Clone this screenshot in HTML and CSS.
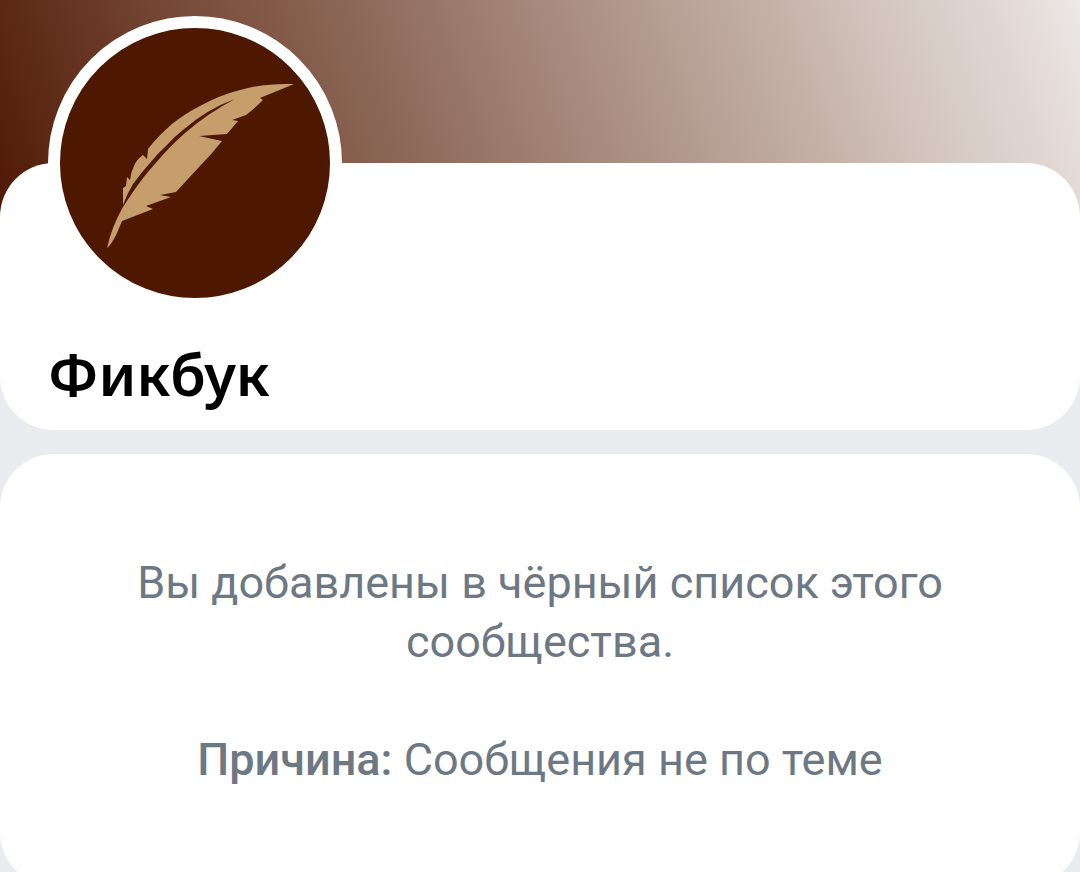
FILE: index.html
```html
<!DOCTYPE html>
<html lang="ru">
<head>
<meta charset="utf-8">
<meta name="viewport" content="width=device-width, initial-scale=1">
<title>Фикбук</title>
<link rel="stylesheet" href="styles.css">
</head>
<body>
<main class="community">
  <header class="cover">
    <section class="card profile">
      <svg class="avatar" viewBox="60 28 270 270" role="img" aria-label="Перо">
        <path class="feather" d="M294 84Q264 83 240 90Q220 95 200 106Q186 113 172 124Q158 136 148 149L147 159L143 155Q136 160 134 166Q131 172 130 180L127 177L126 186L123 188L123 205Q127 194 133 184Q141 173 150 163Q158 153 167 145Q175 136 183 130Q207 109 235 99Q208 113 185 133Q169 147 154 165Q141 179 123 207Q112 226 107 248Q112 244 117 233L122 221L153 209L146 206L171 197L160 195L176 192Q188 179 199 167Q212 154 222 141L199 136L227 134L238 121L232 120L246 115Q254 109 263 100L260 98Z"/>
      </svg>
      <h1 class="name">Фикбук</h1>
    </section>
  </header>
  <section class="card notice">
    <p class="message">Вы добавлены в чёрный список этого сообщества.</p>
    <p class="message"><strong class="label">Причина:</strong> Сообщения не по теме</p>
  </section>
</main>
</body>
</html>
```
FILE: styles.css
```css
body {
  margin: 0;
  height: 100vh;
  overflow: hidden;
  background: #ebecf0;
  font-family: Roboto, "Noto Sans", sans-serif;
}

.community {
  display: flex;
  flex-direction: column;
  gap: 24px;
}

.cover {
  padding-top: 163px;
  background: linear-gradient(70deg, #4e1804 0%, #5c2813 7%, #7a4e3d 24%, #8b6555 36%, #a6897c 53%, #c6b3aa 74%, #d4c7c0 83%, #e2d8d4 93%, #ece9e7 100%) top / 100% 230px no-repeat;
}

.card {
  border-radius: 54px;
  background: #fff;
}

.profile {
  display: flex;
  flex-direction: column;
  align-items: flex-start;
  padding: 0 48px 20px;
}

.avatar {
  width: 270px;
  height: 270px;
  margin-top: -147px;
  border: 12px solid #fff;
  border-radius: 50%;
  background: #4e1700;
}

.feather {
  fill: #c69e6b;
}

.name {
  margin: 28px 0 0;
  font: 600 58px/72px "Noto Sans", sans-serif;
  color: #000;
}

.notice {
  display: flex;
  flex-direction: column;
  gap: 59px;
  padding: 99px 96px 97px;
}

.message {
  margin: 0;
  font-size: 45px;
  line-height: 59px;
  text-align: center;
  color: #6d7885;
}

.label {
  font-weight: 500;
}
```
